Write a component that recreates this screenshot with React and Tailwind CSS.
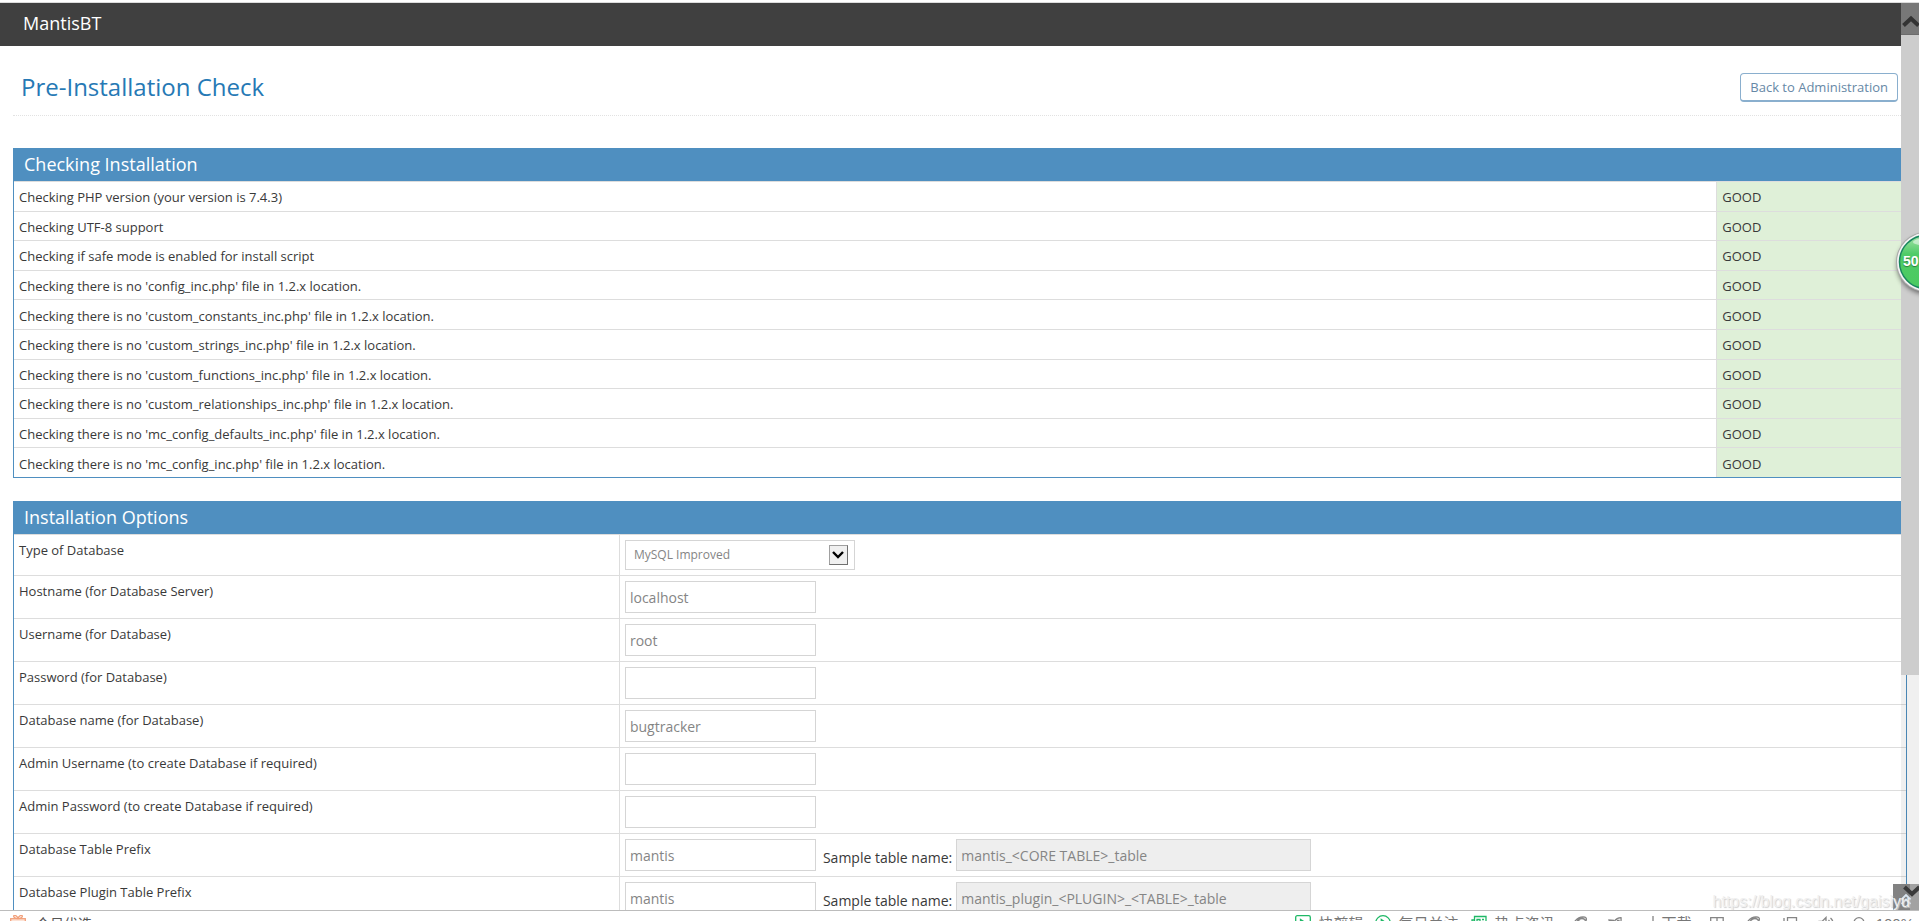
import React, { useState } from "react";

const checks = [
  "Checking PHP version (your version is 7.4.3)",
  "Checking UTF-8 support",
  "Checking if safe mode is enabled for install script",
  "Checking there is no 'config_inc.php' file in 1.2.x location.",
  "Checking there is no 'custom_constants_inc.php' file in 1.2.x location.",
  "Checking there is no 'custom_strings_inc.php' file in 1.2.x location.",
  "Checking there is no 'custom_functions_inc.php' file in 1.2.x location.",
  "Checking there is no 'custom_relationships_inc.php' file in 1.2.x location.",
  "Checking there is no 'mc_config_defaults_inc.php' file in 1.2.x location.",
  "Checking there is no 'mc_config_inc.php' file in 1.2.x location.",
];

const fields = [
  { name: "hostname", label: "Hostname (for Database Server)", value: "localhost" },
  { name: "db_username", label: "Username (for Database)", value: "root" },
  { name: "db_password", label: "Password (for Database)", value: "", type: "password" },
  { name: "database_name", label: "Database name (for Database)", value: "bugtracker" },
  { name: "admin_username", label: "Admin Username (to create Database if required)", value: "" },
  {
    name: "admin_password",
    label: "Admin Password (to create Database if required)",
    value: "",
    type: "password",
  },
  {
    name: "db_table_prefix",
    label: "Database Table Prefix",
    value: "mantis",
    sample: "mantis_<CORE TABLE>_table",
  },
  {
    name: "db_table_plugin_prefix",
    label: "Database Plugin Table Prefix",
    value: "mantis",
    sample: "mantis_plugin_<PLUGIN>_<TABLE>_table",
  },
];

const Panel = ({ title, children }) => (
  <section className="border border-[#4f8fc0]">
    <h2 className="h-8 bg-[#4f8fc0] pl-[10px] text-[18px] leading-[30px] text-white">
      {title}
    </h2>
    {children}
  </section>
);

const OptionRow = ({ id, label, children }) => (
  <tr className="border-t border-[#dddddd]">
    <th
      scope="row"
      className="w-[32%] border-r border-[#dddddd] p-[5px] text-left align-top font-normal"
    >
      <label htmlFor={id}>{label}</label>
    </th>
    <td className="p-[5px]">{children}</td>
  </tr>
);

const TextField = ({ field }) => {
  const [value, setValue] = useState(field.value);

  return (
    <OptionRow id={field.name} label={field.label}>
      <div className="flex items-center">
        <input
          id={field.name}
          name={field.name}
          type={field.type || "text"}
          value={value}
          onChange={(e) => setValue(e.target.value)}
          className="h-8 w-[191px] border border-[#d5d5d5] bg-white px-1 text-[14px] text-[#858585] outline-none"
        />
        {field.sample && (
          <>
            <label
              htmlFor={`${field.name}_sample`}
              className="pt-[6px] pr-1 pl-[7px] text-[14px]"
            >
              Sample table name:
            </label>
            <input
              id={`${field.name}_sample`}
              type="text"
              readOnly
              value={field.sample}
              className="h-8 w-[355px] border border-[#d5d5d5] bg-[#eeeeee] px-1 text-[14px] text-[#858585] outline-none"
            />
          </>
        )}
      </div>
    </OptionRow>
  );
};

const ScrollBar = () => (
  <div className="absolute inset-y-0 right-0 flex w-[18px] flex-col bg-black/6">
    <button
      type="button"
      aria-label="Scroll up"
      className="h-8 shrink-0 border-b border-[#6c6c6c] bg-[#787878]"
    >
      <svg viewBox="0 0 18 31" className="h-[31px] w-[18px]">
        <path d="M2.500 22.500 L10 15.500 L17.500 22.500" fill="none" stroke="#333" strokeWidth="4" />
      </svg>
    </button>
    <div className="h-[640px] shrink-0 bg-[#cdcdcd]"></div>
  </div>
);

// floating speed-up ball docked to the screen edge
const SpeedBall = () => (
  <button
    type="button"
    className="absolute top-[228px] right-0 h-[70px] w-7 overflow-hidden"
  >
    <svg viewBox="0 0 28 70" className="absolute inset-0 h-[70px] w-7">
      <defs>
        <linearGradient id="ball" x1="0" y1="0" x2="0" y2="1">
          <stop offset="0" stopColor="#a5e3a9" />
          <stop offset="0.35" stopColor="#4fcb67" />
          <stop offset="1" stopColor="#4bca60" />
        </linearGradient>
        <filter id="ballShadow" x="-30%" y="-30%" width="160%" height="160%">
          <feGaussianBlur stdDeviation="2.500" />
        </filter>
      </defs>
      <circle cx="35" cy="34" r="29" fill="#000" opacity="0.5" filter="url(#ballShadow)" />
      <circle cx="35" cy="31" r="30" fill="#a9a9a9" />
      <circle cx="35" cy="31" r="29" fill="#f4f4f4" />
      <circle cx="35" cy="31" r="26.500" fill="url(#ball)" stroke="#19875f" strokeWidth="1.500" />
      <ellipse cx="30" cy="11" rx="8" ry="3" fill="#fff" opacity="0.5" />
    </svg>
    <span className="absolute top-5 left-3 font-['Liberation_Sans',sans-serif] text-[14px] leading-5 font-bold text-white [text-shadow:0_1px_1px_#2b7a3b]">
      50
    </span>
  </button>
);

const Icon = ({ color = "#858585", className = "", children }) => (
  <svg
    viewBox="0 0 16 16"
    fill="none"
    stroke={color}
    strokeWidth="1.300"
    className={`size-4 shrink-0 ${className}`}
  >
    {children}
  </svg>
);

const StatusBar = () => (
  <footer className="flex h-[11px] shrink-0 items-start overflow-hidden border-t border-[#bcbcbc] bg-white pr-[5px] pl-[10px] pt-1 font-['Liberation_Sans','Noto_Sans_CJK_SC',sans-serif] text-[15px] leading-[18px] whitespace-nowrap text-[#777777]">
    <a href="#picks" className="flex gap-[10px] text-[14px] text-[#555555]">
      <Icon color="#f2a07b">
        <rect x="0.700" y="3.700" width="14.600" height="4" fill="#fde3d6" />
        <path d="M2 7.700V15h12V7.700M8 3.700C5 3.700 2.700 1.500 4 .6S7.500 1.500 8 3.700C8.500 1.500 10.700-.3 12 .6S11 3.700 8 3.700" />
      </Icon>
      今日优选
    </a>
    <div className="ml-auto flex">
      <a href="#clip" className="flex gap-2">
        <Icon color="#1fb866">
          <rect x="0.700" y="0.700" width="14.600" height="14.600" rx="1.500" />
          <path d="M5.500 4.500v7l5.500-3.500z" fill="#1fb866" />
        </Icon>
        快剪辑
      </a>
      <a href="#daily" className="ml-[11px] flex gap-2">
        <Icon color="#1fb866">
          <circle cx="8" cy="8" r="7.300" />
          <path d="M6.300 4.500v7l5-3.500z" fill="#1fb866" />
        </Icon>
        每日关注
      </a>
      <a href="#news" className="ml-3 flex gap-2">
        <Icon color="#1fb866">
          <path d="M3.500 1.500h11.500v13H1V5h2.500zM3.500 5v9M6 4.500h3v3H6zM11 4.500h2M11 7.500h2M6 11h7" />
        </Icon>
        热点资讯
      </a>
      <button type="button" aria-label="Optimizer" className="ml-[17px]">
        <Icon>
          <path d="M1.500 12C0 7 5 1 11 .8c3 0 4 1.500 3 4M4 12C3 7 6 2.500 10 2.500S14.500 7 13.500 9M5 3.500L13 9" />
        </Icon>
      </button>
      <button type="button" aria-label="Boost" className="ml-5">
        <Icon>
          <path d="M13 1.700c-5 0-7 3-8.500 7l3 3c4-1.500 6-5 5.500-10zM6 4.500L1 4l1 4 3-1M9.500 4.500h1.500v1.500H9.500z" />
        </Icon>
      </button>
      <a href="#downloads" className="ml-[21px] flex gap-px">
        <Icon>
          <path d="M8 1v12M4 9l4 4 4-4" />
        </Icon>
        下载
      </a>
      <button type="button" aria-label="Split" className="ml-[17px]">
        <Icon>
          <path d="M1.700 1.700h12.500v12H1.700zM8 1.700v12M1.700 6h12.500" />
        </Icon>
      </button>
      <button type="button" aria-label="Engine" className="ml-5">
        <Icon>
          <path d="M1.500 12C0 7 5 1 11 .8c3 0 4 1.500 3 4M4 12C3 7 6 2.500 10 2.500S14.500 7 13.500 9M5 7.500h8" />
        </Icon>
      </button>
      <button type="button" aria-label="Window" className="ml-[21px]">
        <Icon>
          <path d="M5.500 1.700h9v9h-9zM2 2v13h8" />
        </Icon>
      </button>
      <button type="button" aria-label="Sound" className="ml-5">
        <Icon>
          <path d="M1 5.500h3l4-4v13l-4-4H1zM10.500 4c2 2 2 6 0 8M12.500 2c3.500 3 3.500 9 0 12" />
        </Icon>
      </button>
      <button type="button" aria-label="Zoom" className="ml-[17px]">
        <Icon>
          <circle cx="8" cy="6.700" r="5" />
          <path d="M11.500 10.500L15 14" />
        </Icon>
      </button>
      <span className="ml-[9px]">100%</span>
    </div>
  </footer>
);

const App = () => {
  const [dbType, setDbType] = useState("mysqli");

  return (
    <div className="relative flex h-screen flex-col overflow-hidden bg-white font-['Open_Sans',sans-serif] text-[13px] leading-5 text-[#393939]">
      <div className="relative min-h-0 flex-1 overflow-hidden border-t border-[#dcdcdc] mt-[2px]">
        <nav className="mr-[17px] h-[43px] bg-[#404040] pl-[23px]">
          <a href="#home" className="text-[18px] leading-10 text-white">
            MantisBT
          </a>
        </nav>

        <main className="pr-3 pl-[13px]">
          <div className="flex h-[70px] items-start justify-between border-b border-dotted border-[#e2e2e2] pt-[27px] pr-[9px] pl-2">
            <h1 className="text-[24px] leading-7 text-[#2679b5]">
              Pre-Installation Check
            </h1>
            <button
              type="button"
              className="h-[29px] rounded-[4px] border border-b-2 border-[#8aafce] bg-white px-[9px] text-[13px] text-[#6688a6]"
            >
              Back to Administration
            </button>
          </div>

          <div className="space-y-[23px] pt-8">
            <Panel title="Checking Installation">
              <table className="h-[296px] w-full border-collapse">
                <tbody>
                  {checks.map((check) => (
                    <tr key={check} className="border-t border-[#dddddd]">
                      <td className="w-[90%] border-r border-[#dddddd] px-[5px] pt-[5px] pb-[3px]">
                        {check}
                      </td>
                      <td className="bg-[#dff0d8] px-[5px] pt-[5px] pb-[3px]">GOOD</td>
                    </tr>
                  ))}
                </tbody>
              </table>
            </Panel>

            <Panel title="Installation Options">
              <table className="w-full border-collapse">
                <tbody>
                  <OptionRow id="db_type" label="Type of Database">
                    <div className="relative w-[230px]">
                      <select
                        id="db_type"
                        value={dbType}
                        onChange={(e) => setDbType(e.target.value)}
                        className="block h-[30px] w-full appearance-none border border-[#d5d5d5] bg-white px-2 text-[12px] text-[#858585] outline-none"
                      >
                        <option value="mysqli">MySQL Improved</option>
                        <option value="pgsql">PostgreSQL</option>
                      </select>
                      <span className="pointer-events-none absolute top-[5px] right-[7px] grid h-5 w-[19px] place-items-center border border-[#707070] border-t-[#a0a0a0] border-l-[#a0a0a0] bg-[#f0f0f0]">
                        <svg viewBox="0 0 12 8" className="h-2 w-3">
                          <path d="M1 1 L6 6 L11 1" fill="none" stroke="#000" strokeWidth="2.400" />
                        </svg>
                      </span>
                    </div>
                  </OptionRow>
                  {fields.map((field) => (
                    <TextField key={field.name} field={field} />
                  ))}
                </tbody>
              </table>
            </Panel>
          </div>
        </main>

        <ScrollBar />
        <SpeedBall />

        <button
          type="button"
          aria-label="Back to top"
          className="absolute right-0 bottom-0 h-[26px] w-[26px] bg-linear-to-r from-[#828282] from-65% to-[#a2a2a2] to-65%"
        >
          <svg viewBox="0 0 26 26" className="size-[26px]">
            <path d="M11.500 3 L19 10 L26.500 3" fill="none" stroke="#3a3a3a" strokeWidth="4" />
            <path
              d="M8.500 15.500 L13 11 L17.500 15.500 M8.500 20 L13 15.500 L17.500 20"
              fill="none"
              stroke="#dbe6f0"
              strokeWidth="1.800"
            />
          </svg>
        </button>
        <p className="pointer-events-none absolute right-[9px] bottom-0 font-['Liberation_Sans',sans-serif] text-[16px] leading-4 text-[#f0f0f0] [text-shadow:1px_1px_1px_#d0d0d0]">
          https://blog.csdn.net/gaisiyu
        </p>
      </div>

      <StatusBar />
    </div>
  );
};

export default App;
